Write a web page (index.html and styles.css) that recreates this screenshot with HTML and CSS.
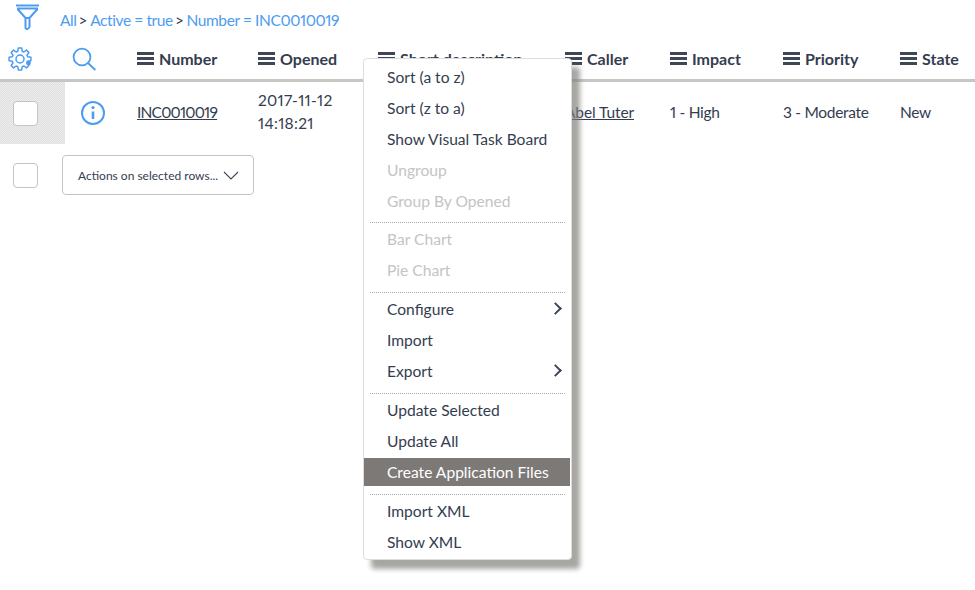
FILE: index.html
```html
<!DOCTYPE html>
<html lang="en">
<head>
    <meta charset="UTF-8">
    <title>Incidents</title>
    <link rel="stylesheet" href="styles.css">
</head>
<body>
    <div class="breadcrumb">
        <svg class="funnel" width="23" height="27" viewBox="0 0 23 27" fill="none" stroke="#4d9cf0" stroke-width="2">
            <path d="M0 1.5H23M1 4.5H22M1.5 5L9.5 14H13.5L21.5 5M9.5 14H13.5V23Q11 26.5 9.5 24Z"/>
        </svg>
        <div class="crumbs">
            <a>All</a><i>&gt;</i><a>Active = true</a><i>&gt;</i><a>Number = INC0010019</a>
        </div>
    </div>

    <div class="list-row list-head">
        <div class="gear-cell">
            <svg width="24" height="24" viewBox="0 0 24 24" fill="none" stroke="#4d9cf0" stroke-width="1.5">
                <polygon stroke-linejoin="round" points="9.8,4.3 10.3,1.1 13.7,1.1 14.2,4.3 15.9,5 18.5,3.1 20.9,5.5 19,8.1 19.7,9.8 22.9,10.3 22.9,13.7 19.7,14.2 19,15.9 20.9,18.5 18.5,20.9 15.9,19 14.2,19.7 13.7,22.9 10.3,22.9 9.8,19.7 8.1,19 5.5,20.9 3.1,18.5 5,15.9 4.3,14.2 1.1,13.7 1.1,10.3 4.3,9.8 5,8.1 3.1,5.5 5.5,3.1 8.1,5"/>
                <circle cx="12" cy="12" r="4"/>
                <circle cx="20.5" cy="16" r="2.4" fill="#4d9cf0" stroke="none"/>
            </svg>
        </div>
        <div class="search-cell">
            <svg width="24" height="24" viewBox="0 0 24 24" fill="none" stroke="#4d9cf0" stroke-width="1.8">
                <circle cx="10" cy="10" r="8.4"/>
                <path d="M16 16L23.4 23"/>
            </svg>
        </div>
        <div class="col"><span class="bars"></span>Number</div>
        <div class="col"><span class="bars"></span>Opened</div>
        <div class="col"><span class="bars"></span>Short description</div>
        <div class="col"><span class="bars"></span>Caller</div>
        <div class="col"><span class="bars"></span>Impact</div>
        <div class="col"><span class="bars"></span>Priority</div>
        <div class="col"><span class="bars"></span>State</div>
    </div>

    <div class="list-row list-item">
        <div class="check-cell"><span class="check"></span></div>
        <div class="info-cell">
            <svg width="26" height="26" viewBox="0 0 26 26" fill="none" stroke="#4d9cf0" stroke-width="2">
                <circle cx="13" cy="13" r="11"/>
                <path d="M13 11.5V19" stroke-width="2.6"/>
                <circle cx="13" cy="7.5" r="1.6" fill="#4d9cf0" stroke="none"/>
            </svg>
        </div>
        <div class="cell number"><a>INC0010019</a></div>
        <div class="cell opened">2017-11-12<br>14:18:21</div>
        <div class="cell"></div>
        <div class="cell caller"><a>Abel Tuter</a></div>
        <div class="cell">1 - High</div>
        <div class="cell">3 - Moderate</div>
        <div class="cell">New</div>
    </div>

    <div class="actions-row">
        <span class="check"></span>
        <button class="actions">
            Actions on selected rows...
            <svg width="16" height="9" viewBox="0 0 16 9" fill="none" stroke="#3f4757" stroke-width="1.1"><path d="M1 1L8 8L15 1"/></svg>
        </button>
    </div>

    <ul class="menu">
        <li>Sort (a to z)</li>
        <li>Sort (z to a)</li>
        <li>Show Visual Task Board</li>
        <li class="off">Ungroup</li>
        <li class="off">Group By Opened</li>
        <li class="sep tight"></li>
        <li class="off">Bar Chart</li>
        <li class="off">Pie Chart</li>
        <li class="sep"></li>
        <li class="sub">Configure</li>
        <li>Import</li>
        <li class="sub">Export</li>
        <li class="sep"></li>
        <li>Update Selected</li>
        <li>Update All</li>
        <li class="active">Create Application Files</li>
        <li class="sep"></li>
        <li>Import XML</li>
        <li>Show XML</li>
    </ul>
</body>
</html>
```

FILE: styles.css
```css
body {
    margin: 0;
    height: 590px;
    overflow: hidden;
    position: relative;
    background-color: #fff;
    font-family: Lato, Arial, sans-serif;
    font-size: 15.6px;
    font-variant-numeric: proportional-nums;
    color: #343d4f;
}
.breadcrumb {
    height: 40px;
    display: flex;
    align-items: flex-start;
    padding-left: 16px;
}
.funnel {
    margin-top: 4px;
}
.crumbs {
    margin-left: 21px;
    margin-top: 9px;
    line-height: 22px;
    font-size: 15.5px;
    letter-spacing: -0.4px;
    color: #4d9cf0;
}
.crumbs i {
    font-style: normal;
    color: #343d4f;
    margin: 0 3px 0 2px;
}
.list-row {
    display: grid;
    grid-template-columns: 65px 72px 121px 120px 187px 105px 113px 117px 75px;
}
.list-head {
    height: 38px;
    padding-bottom: 1px;
    border-bottom: 3px solid #c6c6c3;
    align-items: center;
    font-size: 16px;
    font-weight: 700;
}
.gear-cell {
    padding-left: 8px;
    height: 24px;
}
.search-cell {
    padding-left: 7px;
    height: 24px;
}
.col {
    display: flex;
    align-items: center;
    white-space: nowrap;
    margin-top: -2px;
}
.bars {
    width: 17px;
    height: 13px;
    margin-right: 5px;
    box-sizing: border-box;
    border-top: 3px solid #3f4757;
    border-bottom: 3px solid #3f4757;
    background: linear-gradient(#3f4757, #3f4757) center / 100% 3px no-repeat;
}
.list-item {
    height: 62px;
    align-items: center;
}
.check-cell {
    height: 62px;
    background: repeating-conic-gradient(#e0e0e0 0 25%, #ececec 0 50%) 0 0 / 2px 2px;
    display: flex;
    align-items: center;
    padding-left: 13px;
}
.check {
    display: block;
    width: 23px;
    height: 23px;
    background-color: #fff;
    border: 1px solid #c4c4c4;
    border-radius: 4px;
}
.info-cell {
    padding-left: 15px;
    height: 26px;
}
.cell {
    white-space: nowrap;
    margin-top: -2px;
    font-size: 15.5px;
    letter-spacing: -0.3px;
}
.cell a {
    text-decoration: underline;
}
.number {
    letter-spacing: -0.8px;
}
.caller {
    letter-spacing: -0.1px;
}
.opened {
    line-height: 23px;
    margin-top: -2px;
    letter-spacing: 0.3px;
}
.actions-row {
    display: flex;
    align-items: center;
    padding-left: 13px;
    margin-top: 11px;
    gap: 24px;
}
.actions {
    width: 192px;
    height: 40px;
    padding: 0 14px 0 15px;
    display: flex;
    align-items: center;
    justify-content: space-between;
    background-color: #fff;
    border: 1px solid #c4c4c4;
    border-radius: 4px;
    font-family: inherit;
    font-size: 12px;
    color: #343d4f;
    white-space: nowrap;
}
.actions svg {
    flex-shrink: 0;
}
.menu {
    position: absolute;
    left: 363px;
    top: 58px;
    width: 209px;
    height: 502px;
    margin: 0;
    padding: 3px 0 0;
    box-sizing: border-box;
    list-style: none;
    background-color: #fff;
    border: 1px solid #ddd;
    border-radius: 4px;
    box-shadow: 8px 9px 5px rgba(130, 128, 122, 0.7);
}
.menu li {
    height: 31px;
    line-height: 30px;
    padding-left: 23px;
    position: relative;
}
.menu .off {
    color: #c4c4c4;
}
.menu .sep {
    height: 0;
    margin: 6px 6px 1px 6px;
    padding: 0;
    border-top: 1px dotted #aaa;
}
.menu .tight {
    margin-top: 5px;
}
.menu .active {
    height: 28px;
    line-height: 28px;
    margin: 1px 1px 8px 0;
    background-color: #7d7977;
    color: #fff;
}
.menu .active + .sep {
    margin-top: 0;
}
.menu .sub::after {
    content: "";
    position: absolute;
    right: 11px;
    top: 10px;
    width: 7px;
    height: 7px;
    border-top: 2px solid #3f4757;
    border-right: 2px solid #3f4757;
    transform: rotate(45deg);
}
```
